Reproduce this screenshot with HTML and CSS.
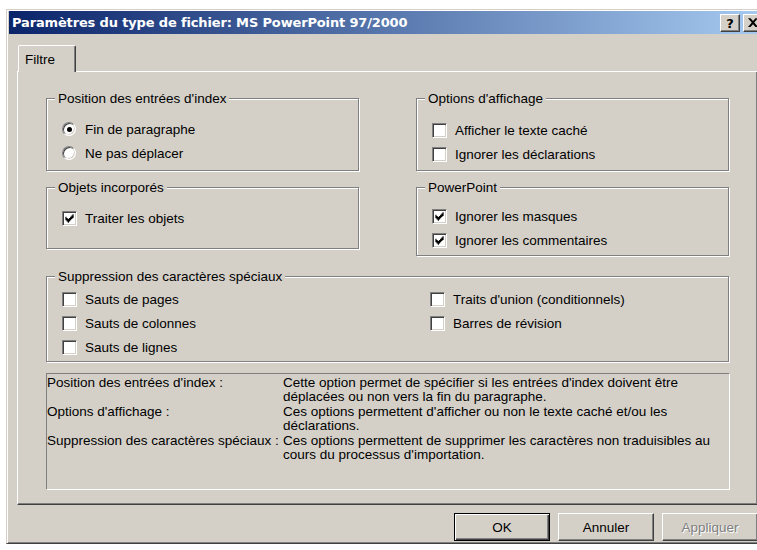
FILE: index.html
```html
<!DOCTYPE html>
<html lang="fr">
<head>
<meta charset="utf-8">
<title>Paramètres du type de fichier</title>
<link rel="stylesheet" href="styles.css">
</head>
<body>
<div class="window">
  <div class="titlebar">
    <span class="title">Paramètres du type de fichier: MS PowerPoint 97/2000</span>
    <div class="caption-buttons">
      <span class="cap-btn cap-help">?</span>
      <span class="cap-btn cap-close">
        <svg width="10" height="9" viewBox="0 0 8 7" aria-hidden="true">
          <path d="M0 0h2l2 2.2L6 0h2L5 3.5 8 7H6L4 4.8 2 7H0l3-3.5z" fill="#000"/>
        </svg>
      </span>
    </div>
  </div>

  <div class="dialog">
    <div class="tabs">
      <div class="tab">Filtre</div>
    </div>

    <div class="panel">
      <div class="two-cols">
        <div class="group group-position">
          <span class="group-label">Position des entrées d'index</span>
          <label class="option"><span class="radio is-on"></span>Fin de paragraphe</label>
          <label class="option"><span class="radio"></span>Ne pas déplacer</label>
        </div>

        <div class="group group-display">
          <span class="group-label">Options d'affichage</span>
          <label class="option"><span class="check"></span>Afficher le texte caché</label>
          <label class="option"><span class="check"></span>Ignorer les déclarations</label>
        </div>

        <div class="group group-objects">
          <span class="group-label">Objets incorporés</span>
          <label class="option"><span class="check is-on"><svg width="13" height="13" viewBox="0 0 11 11" aria-hidden="true"><path d="M2 4h1v3H2zM3 5h1v3H3zM4 6h1v3H4zM5 5h1v3H5zM6 4h1v3H6zM7 3h1v3H7zM8 2h1v3H8z" fill="#000"/></svg></span>Traiter les objets</label>
        </div>

        <div class="group group-powerpoint">
          <span class="group-label">PowerPoint</span>
          <label class="option"><span class="check is-on"><svg width="13" height="13" viewBox="0 0 11 11" aria-hidden="true"><path d="M2 4h1v3H2zM3 5h1v3H3zM4 6h1v3H4zM5 5h1v3H5zM6 4h1v3H6zM7 3h1v3H7zM8 2h1v3H8z" fill="#000"/></svg></span>Ignorer les masques</label>
          <label class="option"><span class="check is-on"><svg width="13" height="13" viewBox="0 0 11 11" aria-hidden="true"><path d="M2 4h1v3H2zM3 5h1v3H3zM4 6h1v3H4zM5 5h1v3H5zM6 4h1v3H6zM7 3h1v3H7zM8 2h1v3H8z" fill="#000"/></svg></span>Ignorer les commentaires</label>
        </div>
      </div>

      <div class="group group-special">
        <span class="group-label">Suppression des caractères spéciaux</span>
        <div class="special-grid">
          <label class="option"><span class="check"></span>Sauts de pages</label>
          <label class="option"><span class="check"></span>Traits d'union (conditionnels)</label>
          <label class="option"><span class="check"></span>Sauts de colonnes</label>
          <label class="option"><span class="check"></span>Barres de révision</label>
          <label class="option"><span class="check"></span>Sauts de lignes</label>
        </div>
      </div>

      <div class="description">
        <div class="desc-term">Position des entrées d'index :</div>
        <div class="desc-text">Cette option permet de spécifier si les entrées d'index doivent être<br>déplacées ou non vers la fin du paragraphe.</div>
        <div class="desc-term">Options d'affichage :</div>
        <div class="desc-text">Ces options permettent d'afficher ou non le texte caché et/ou les<br>déclarations.</div>
        <div class="desc-term">Suppression des caractères spéciaux :</div>
        <div class="desc-text">Ces options permettent de supprimer les caractères non traduisibles au<br>cours du processus d'importation.</div>
      </div>
    </div>

    <div class="actions">
      <button class="btn btn-default" type="button">OK</button>
      <button class="btn" type="button">Annuler</button>
      <button class="btn btn-disabled" type="button" disabled>Appliquer</button>
    </div>
  </div>
</div>
</body>
</html>
```
FILE: styles.css
```css
html, body {
  margin: 0;
  padding: 0;
}

body {
  width: 757px;
  height: 550px;
  overflow: hidden;
  background: #fff;
  font-family: "Liberation Sans", Arial, sans-serif;
  font-size: 13.5px;
  color: #000;
}

/* window frame */
.window {
  margin: 9px 0 0 6px;
  width: 763px;
  box-sizing: border-box;
  padding: 1px 2px 2px 2px;
  background: #d4d0c8;
  border: 1px solid;
  border-color: #d4d0c8 #404040 #404040 #d4d0c8;
  box-shadow: inset 1px 1px 0 #fff, inset -1px -1px 0 #808080;
}

.titlebar {
  height: 23px;
  display: flex;
  align-items: center;
  justify-content: space-between;
  padding: 0 3px;
  background: linear-gradient(to right, #0a246a, #a6caf0);
}

.title {
  font-family: "DejaVu Sans", Verdana, sans-serif;
  font-weight: bold;
  font-size: 13px;
  color: #fff;
  white-space: nowrap;
  letter-spacing: -0.15px;
}

.caption-buttons {
  display: flex;
  gap: 3px;
}

.cap-btn {
  width: 20px;
  height: 18px;
  box-sizing: border-box;
  display: flex;
  align-items: center;
  justify-content: center;
  background: #d4d0c8;
  border: 1px solid;
  border-color: #fff #404040 #404040 #fff;
  box-shadow: inset -1px -1px 0 #808080;
}

.cap-help {
  font-family: "DejaVu Sans", Verdana, sans-serif;
  font-weight: bold;
  font-size: 13px;
  line-height: 1;
  padding-top: 1px;
}

/* dialog body */
.dialog {
  padding: 11px 8px 0 8px;
}

.tabs {
  display: flex;
  padding-left: 1px;
}

.tab {
  position: relative;
  z-index: 1;
  width: 58px;
  height: 27px;
  box-sizing: border-box;
  margin-bottom: -1px;
  padding-left: 6px;
  display: flex;
  align-items: center;
  background: #d4d0c8;
  border-top: 1px solid #fff;
  border-left: 1px solid #fff;
  border-right: 1px solid #404040;
  border-top-left-radius: 2px;
  border-top-right-radius: 2px;
  box-shadow: inset -1px 0 0 #808080;
}

.panel {
  border: 1px solid;
  border-color: #fff #404040 #404040 #fff;
  box-shadow: inset -1px -1px 0 #808080;
  padding: 26px 0 14px 28px;
}

.two-cols {
  display: grid;
  grid-template-columns: 313px 313px;
  column-gap: 57px;
  row-gap: 16px;
  align-items: start;
}

/* etched group box */
.group {
  position: relative;
  box-sizing: border-box;
  border: 1px solid #808080;
  box-shadow: inset 1px 1px 0 #fff, 1px 1px 0 #fff;
  padding-left: 15px;
}

.group-label {
  position: absolute;
  left: 8px;
  top: -9px;
  padding: 0 3px;
  line-height: 17px;
  background: #d4d0c8;
  white-space: nowrap;
}

.group-position {
  height: 73px;
  padding-top: 18px;
}

.group-display {
  height: 73px;
  padding-top: 19px;
}

.group-objects {
  height: 62px;
  padding-top: 18px;
}

.group-powerpoint {
  height: 69px;
  padding-top: 16px;
}

.group-special {
  width: 683px;
  height: 86px;
  margin-top: 20px;
  padding-top: 10px;
}

.special-grid {
  display: grid;
  grid-template-columns: 368px 1fr;
}

.option {
  height: 24px;
  display: flex;
  align-items: center;
  gap: 8px;
  white-space: nowrap;
}

/* sunken check box */
.check {
  width: 15px;
  height: 15px;
  box-sizing: border-box;
  flex: none;
  display: flex;
  background: #fff;
  border: 1px solid;
  border-color: #808080 #fff #fff #808080;
  box-shadow: inset 1px 1px 0 #404040, inset -1px -1px 0 #d4d0c8;
}

/* round option button */
.radio {
  position: relative;
  width: 14px;
  height: 14px;
  box-sizing: border-box;
  flex: none;
  border-radius: 50%;
  background: #fff;
  border: 1px solid;
  border-color: #808080 #fff #fff #808080;
  box-shadow: inset 1px 1px 0 #404040, inset -1px -1px 0 #d4d0c8;
  margin-right: 1px;
}

.radio.is-on::after {
  content: "";
  position: absolute;
  left: 3.5px;
  top: 3.5px;
  width: 5px;
  height: 5px;
  border-radius: 50%;
  background: #000;
}

/* description area */
.description {
  width: 684px;
  height: 117px;
  box-sizing: border-box;
  margin-top: 11px;
  padding-top: 2px;
  border: 1px solid;
  border-color: #808080 #fff #fff #808080;
  display: grid;
  grid-template-columns: 236px 1fr;
  align-content: start;
  line-height: 14.4px;
}

.desc-term,
.desc-text {
  white-space: nowrap;
}

/* push buttons */
.actions {
  display: flex;
  justify-content: flex-end;
  gap: 8px;
  margin-top: 8px;
}

.btn {
  width: 96px;
  height: 28px;
  box-sizing: border-box;
  margin: 0;
  padding: 0;
  font: inherit;
  color: #000;
  background: #d4d0c8;
  border: 1px solid;
  border-color: #fff #404040 #404040 #fff;
  box-shadow: inset -1px -1px 0 #808080;
  border-radius: 0;
}

.btn-default {
  border-color: #000;
  box-shadow: inset 1px 1px 0 #fff, inset -1px -1px 0 #404040, inset -2px -2px 0 #808080;
}

.btn-disabled {
  color: #808080;
  text-shadow: 1px 1px 0 #fff;
}
```
